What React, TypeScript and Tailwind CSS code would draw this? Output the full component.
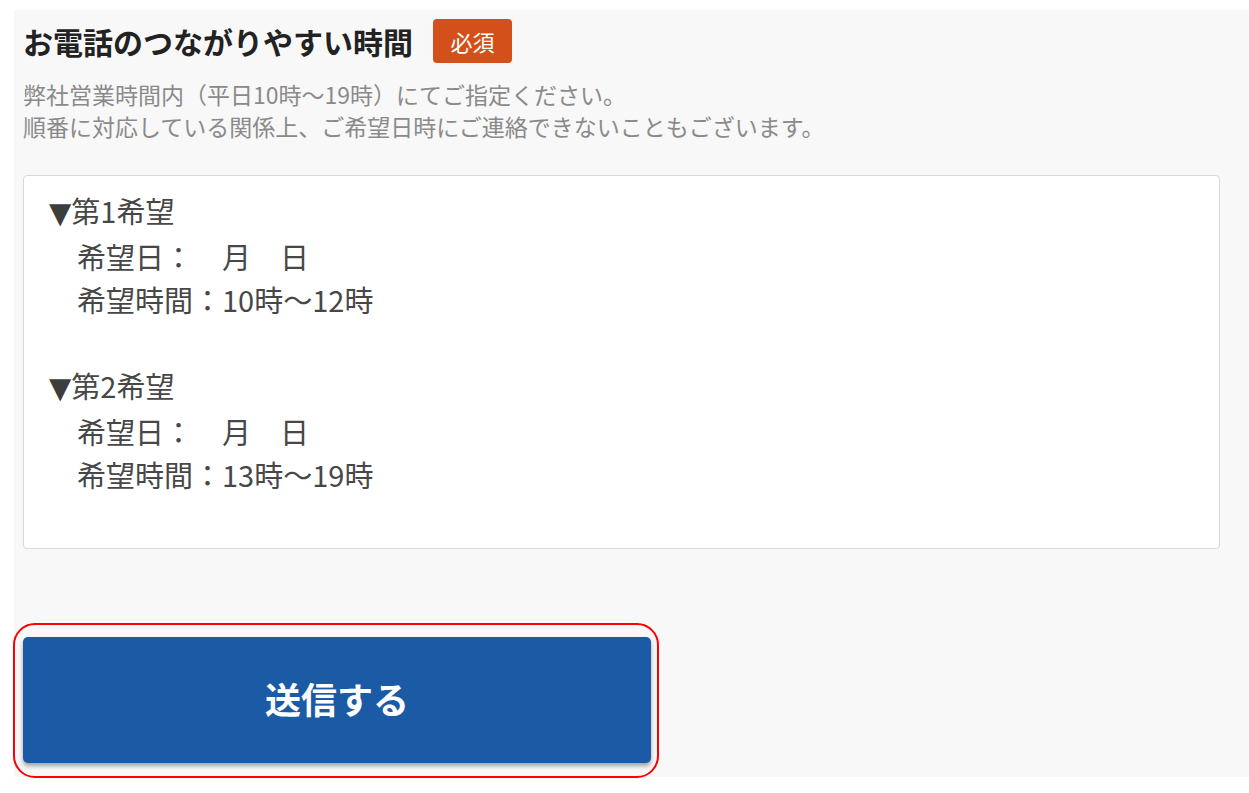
import React from 'react';

const JP = { fontFamily: '"Noto Sans CJK JP", "Noto Sans", sans-serif' };

const wishes = [
  { label: '第1希望', time: '10時〜12時' },
  { label: '第2希望', time: '13時〜19時' },
];

const App: React.FC = () => {
  return (
    <div className="min-h-screen w-full bg-white" style={JP}>
      <div className="ml-[14px] mt-[10px] h-[767px] bg-[#f8f8f8] pl-[9px] pt-[9px]">
        {/* Heading */}
        <div className="flex h-[44px] items-center">
          <h2 className="text-[30px] font-bold leading-none text-[#222222]">
            お電話のつながりやすい時間
          </h2>
          <span className="ml-[20px] flex h-[44px] w-[79px] items-center justify-center rounded-[4px] bg-[#d3501a] text-[22px] text-white">
            必須
          </span>
        </div>

        <p className="mt-[15px] text-[23px] leading-[32px] text-[#8a8a8a]">
          弊社営業時間内（平日10時〜19時）にてご指定ください。
          <br />
          順番に対応している関係上、ご希望日時にご連絡できないこともございます。
        </p>

        {/* Textarea */}
        <div className="mt-[33px] h-[374px] w-[1197px] rounded-[4px] border border-[#d6d9dd] bg-white pl-[25px] pt-[13px] text-[29px] leading-[43px] text-[#474747]">
          {wishes.map((w, i) => (
            <div key={w.label} className={i > 0 ? 'mt-[43px]' : ''}>
              <div>
                <span className="text-[#3d3d3d]" style={{ fontFamily: '"DejaVu Sans", sans-serif' }}>▼</span>
                {w.label}
              </div>
              <div className="pl-[28px]">希望日：　月　日</div>
              <div className="pl-[28px]">希望時間：{w.time}</div>
            </div>
          ))}
        </div>

        {/* Submit */}
        <div className="relative mt-[88px] w-[628px]">
          <button className="flex h-[126px] w-full items-center justify-center rounded-[5px] bg-[#1b5ba5] pb-[4px] text-[36px] font-bold text-white shadow-[0_3px_4px_rgba(0,0,0,0.35)]">
            送信する
          </button>
          <div className="pointer-events-none absolute -bottom-[15px] -left-[10px] -right-[8px] -top-[14px] rounded-[22px] border-2 border-[#ff0000]" />
        </div>
      </div>
    </div>
  );
};

export default App;
